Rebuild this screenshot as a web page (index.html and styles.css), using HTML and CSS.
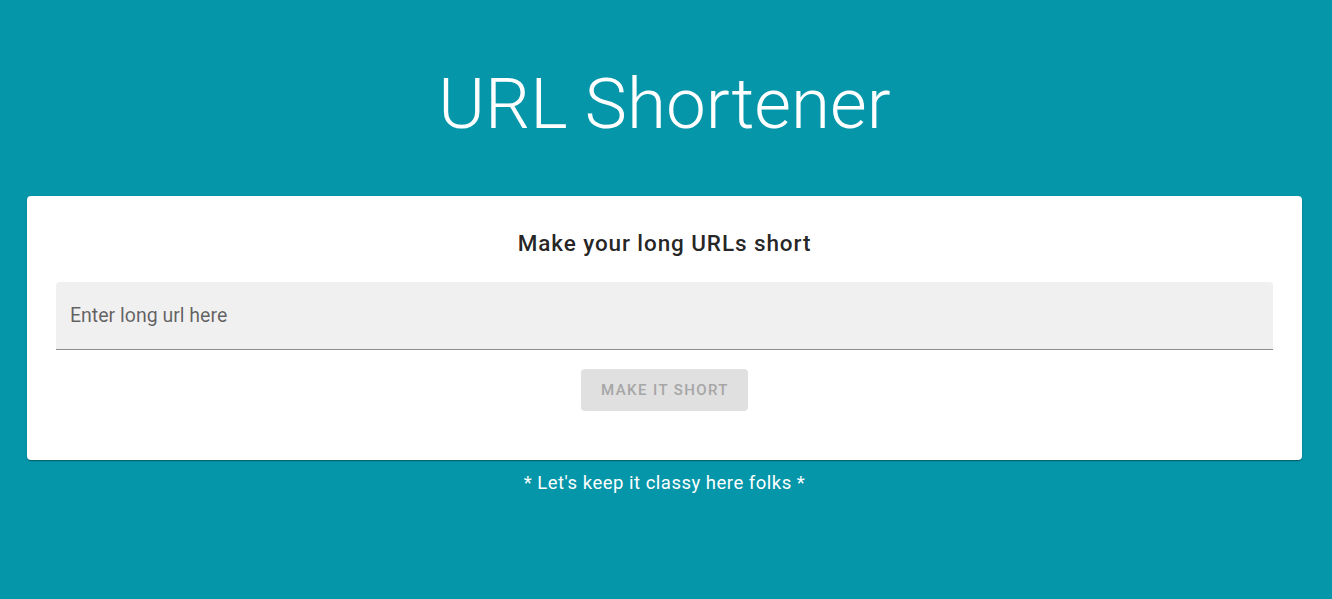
FILE: index.html
```html
<!DOCTYPE html>
<html>
<head>
<meta charset="utf-8">
<link rel="stylesheet" href="styles.css">
</head>
<body>
<div class="page">
  <h1 class="title">URL Shortener</h1>
  <div class="card">
    <h2 class="card-title">Make your long URLs short</h2>
    <div class="field">
      <input class="field-input" type="text" placeholder="Enter long url here">
    </div>
    <div class="actions">
      <button class="btn" disabled>Make it short</button>
    </div>
  </div>
  <p class="note">* Let's keep it classy here folks *</p>
</div>
</body>
</html>
```
FILE: styles.css
```css
html, body {
  margin: 0;
  padding: 0;
  height: 100%;
}
body {
  background: #0596aa;
  font-family: Roboto, "Noto Sans", sans-serif;
}
.page {
  display: flex;
  flex-direction: column;
  align-items: stretch;
  padding: 0 30px 0 27px;
}
.title {
  margin: 64px 0 0;
  text-align: center;
  font-weight: 300;
  font-size: 71px;
  line-height: 80px;
  color: #fff;
  letter-spacing: 0;
}
.card {
  margin-top: 52px;
  background: #fff;
  border-radius: 4px;
  box-shadow: 0 2px 1px -1px rgba(0,0,0,.2), 0 1px 1px 0 rgba(0,0,0,.14), 0 1px 3px 0 rgba(0,0,0,.12);
  padding: 31px 29px 49px;
  display: flex;
  flex-direction: column;
}
.card-title {
  margin: 0;
  text-align: center;
  font-size: 22.5px;
  font-weight: 500;
  letter-spacing: 0.9px;
  line-height: 32px;
  color: rgba(0,0,0,.87);
}
.field {
  margin-top: 23px;
  background: #f0f0f0;
  border-radius: 4px 4px 0 0;
  border-bottom: 1px solid #8c8c8c;
  height: 67px;
  display: flex;
  align-items: center;
}
.field-input {
  border: 0;
  outline: 0;
  background: transparent;
  font-family: Roboto, sans-serif;
  font-size: 19.5px;
  padding: 0 14px;
  width: 100%;
  color: rgba(0,0,0,.87);
  margin-top: 0;
}
.field-input::placeholder {
  color: rgba(0,0,0,.6);
}
.actions {
  margin-top: 19px;
  display: flex;
  justify-content: center;
}
.btn {
  border: 0;
  border-radius: 4px;
  background: #e0e0e0;
  color: #a6a6a6;
  font-family: Roboto, sans-serif;
  font-size: 15px;
  font-weight: 500;
  text-transform: uppercase;
  letter-spacing: 1.4px;
  height: 42px;
  width: 167px;
  padding: 0 0 0 1px;
}
.note {
  margin: 12px 0 0;
  text-align: center;
  color: #fff;
  font-size: 18.5px;
  letter-spacing: 0.5px;
  line-height: 22px;
}
```
